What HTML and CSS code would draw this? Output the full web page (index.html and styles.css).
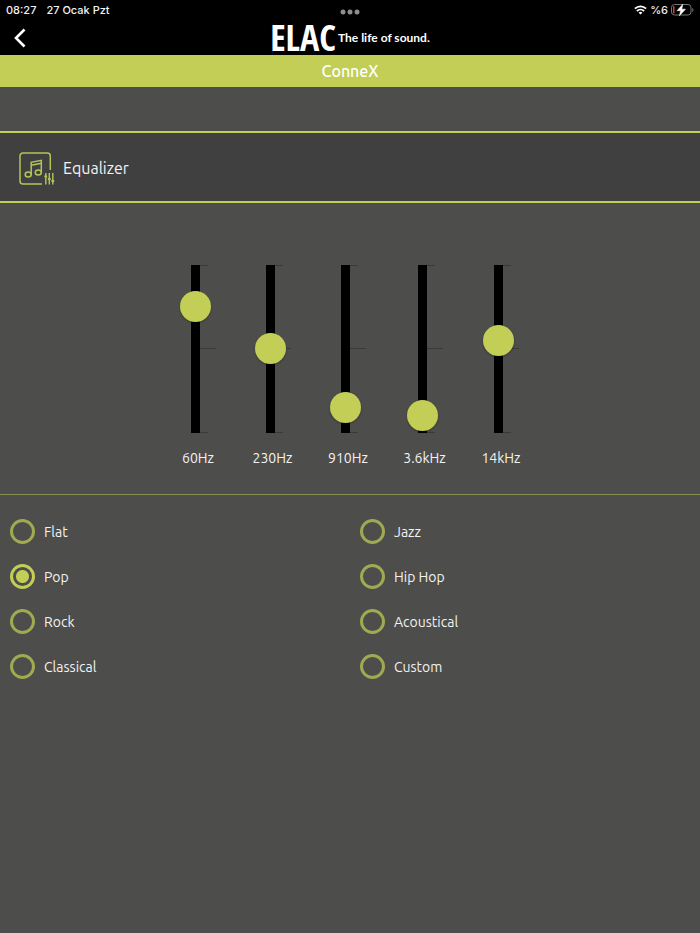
FILE: index.html
```html
<!DOCTYPE html>
<html lang="en">
<head>
  <meta charset="UTF-8">
  <meta name="viewport" content="width=device-width, initial-scale=1.0">
  <title>ConneX Equalizer</title>
  <link rel="stylesheet" href="styles.css">
</head>
<body>
  <header>
    <div class="status-bar">
      <div class="status-left">
        <span>08:27</span>
        <span>27 Ocak Pzt</span>
      </div>
      <svg class="dots" width="20" height="6" viewBox="0 0 20 6" fill="#8e8e8e">
        <circle cx="3" cy="3" r="2.5"></circle>
        <circle cx="10" cy="3" r="2.5"></circle>
        <circle cx="17" cy="3" r="2.5"></circle>
      </svg>
      <div class="status-right">
        <svg width="13" height="10" viewBox="0 0 13 10" fill="none" stroke="#fff" stroke-width="1.8">
          <path d="M.9 3.7a8 8 0 0 1 11.2 0"></path>
          <path d="M2.9 6a5.2 5.2 0 0 1 7.2 0"></path>
          <path d="M6.5 9.6 4.6 7.7a2.8 2.8 0 0 1 3.8 0z" fill="#fff" stroke="none"></path>
        </svg>
        <span>%6</span>
        <svg width="23" height="12" viewBox="0 0 23 12">
          <rect x=".5" y=".5" width="19.5" height="10.5" rx="3" fill="none" stroke="#777"></rect>
          <path d="M21.3 4v4q1.2-.6 1.2-2t-1.2-2" fill="#777"></path>
          <rect x="2" y="2" width="1.5" height="7.5" rx=".7" fill="#e8372c"></rect>
          <path d="M11.8.2 6 6.700h3.600L8.400 11.800 14.500 5.200h-3.700z" fill="#fff" stroke="#fff" stroke-width=".5"></path>
        </svg>
      </div>
    </div>
    <div class="nav-bar">
      <button type="button" class="back" aria-label="Back">
        <svg width="12" height="20" viewBox="0 0 12 20" fill="none" stroke="#fff" stroke-width="2.6">
          <path d="M10.5 1.500 2 10l8.500 8.500"></path>
        </svg>
      </button>
      <div class="brand">
        <span class="logo">ELAC</span>
        <span class="tagline">The life of sound.</span>
      </div>
    </div>
    <h1>ConneX</h1>
  </header>

  <main>
    <div class="section-title">
      <svg width="36" height="33" viewBox="0 0 36 33" fill="none" stroke="#b5c457" stroke-width="1.5">
        <path d="M31.300 18V4a3 3 0 0 0-3-3H4a3 3 0 0 0-3 3v25a3 3 0 0 0 3 3h19"></path>
        <ellipse cx="9.200" cy="22.500" rx="3" ry="2.500"></ellipse>
        <ellipse cx="19.300" cy="20.500" rx="3" ry="2.500"></ellipse>
        <path d="M12.200 22.500V10.300l10.100-2v12.200M12.200 13.300l10.100-2"></path>
        <path d="M26.800 21v11.500M30.300 21v11.500M33.800 21v11.500" stroke-width="1.4"></path>
        <path d="M25.400 24.500h2.800M28.900 27h2.800M32.400 29h2.800" stroke-width="2.2"></path>
      </svg>
      <h2>Equalizer</h2>
    </div>

    <div class="bands">
      <div class="band">
        <input type="range" id="band-60" min="-10" max="10" value="5">
        <label for="band-60">60Hz</label>
      </div>
      <div class="band">
        <input type="range" id="band-230" min="-10" max="10" value="0">
        <label for="band-230">230Hz</label>
      </div>
      <div class="band">
        <input type="range" id="band-910" min="-10" max="10" value="-7">
        <label for="band-910">910Hz</label>
      </div>
      <div class="band">
        <input type="range" id="band-3600" min="-10" max="10" value="-8">
        <label for="band-3600">3.6kHz</label>
      </div>
      <div class="band">
        <input type="range" id="band-14000" min="-10" max="10" value="1">
        <label for="band-14000">14kHz</label>
      </div>
    </div>

    <form class="presets">
      <label><input type="radio" name="preset" value="flat">Flat</label>
      <label><input type="radio" name="preset" value="jazz">Jazz</label>
      <label><input type="radio" name="preset" value="pop" checked>Pop</label>
      <label><input type="radio" name="preset" value="hiphop">Hip Hop</label>
      <label><input type="radio" name="preset" value="rock">Rock</label>
      <label><input type="radio" name="preset" value="acoustical">Acoustical</label>
      <label><input type="radio" name="preset" value="classical">Classical</label>
      <label><input type="radio" name="preset" value="custom">Custom</label>
    </form>
  </main>
</body>
</html>
```
FILE: styles.css
```css
* {
  box-sizing: border-box;
}
body {
  margin: 0;
  min-height: 100vh;
  background-color: #4d4d4b;
  color: #f2f2f2;
  font-family: Ubuntu, "Noto Sans", sans-serif;
  font-size: 14px;
  line-height: 20px;
}
header {
  background-color: #000;
}
.status-bar {
  display: grid;
  grid-template-columns: 1fr auto 1fr;
  align-items: center;
  height: 20px;
  padding: 0 6px;
  font-family: Inter, sans-serif;
  font-size: 11px;
  font-weight: 500;
}
.status-left {
  display: flex;
  gap: 10px;
}
.status-right {
  display: flex;
  align-items: center;
  justify-content: flex-end;
  gap: 3px;
}
.dots {
  align-self: end;
  margin-bottom: 5px;
}
.nav-bar {
  display: grid;
  grid-template-columns: 1fr auto 1fr;
  align-items: center;
  height: 35px;
  padding: 0 14px;
}
.back {
  display: flex;
  justify-self: start;
  padding: 0;
  border: 0;
  background: none;
  cursor: pointer;
}
.brand {
  display: flex;
  align-items: center;
  gap: 2px;
  color: #fff;
}
.logo {
  font-family: "Liberation Sans Narrow", "Open Sans Condensed", "DejaVu Sans Condensed", sans-serif;
  font-size: 36px;
  font-weight: bold;
  line-height: 35px;
}
.tagline {
  font-family: Lato, sans-serif;
  font-size: 12px;
  font-weight: bold;
}
h1 {
  margin: 0;
  background-color: #c2ce55;
  color: #fff;
  font-size: 16px;
  font-weight: 500;
  line-height: 32px;
  text-align: center;
}
.section-title {
  display: flex;
  align-items: center;
  gap: 8px;
  height: 72px;
  margin-top: 44px;
  padding: 2px 19px 0;
  border-top: 2px solid #c2ce55;
  border-bottom: 2px solid #c2ce55;
  background-color: #404040;
}
h2 {
  margin: 0;
  font-size: 16px;
  font-weight: 400;
}
.bands {
  display: grid;
  grid-template-columns: 74px 75px 76px 77px 76px;
  justify-content: center;
  padding: 46px 0 26px;
  border-bottom: 1px solid #848e50;
}
.band {
  display: flex;
  flex-direction: column;
  align-items: center;
}
.band input {
  appearance: none;
  writing-mode: vertical-lr;
  direction: rtl;
  width: 41px;
  height: 199px;
  margin: 0 5px 0 0;
  background:
    linear-gradient(#000, #000) center / 9px 168px no-repeat,
    linear-gradient(#3a3a39, #3a3a39) 25px 16px / 8px 1px no-repeat,
    linear-gradient(#3a3a39, #3a3a39) 25px 99px / 16px 1px no-repeat,
    linear-gradient(#3a3a39, #3a3a39) 25px 183px / 8px 1px no-repeat;
}
.band input::-webkit-slider-thumb {
  appearance: none;
  width: 31px;
  height: 31px;
  border-radius: 50%;
  background-color: #c2ce55;
  box-shadow: 0 1px 2px rgba(0, 0, 0, 0.3);
}
.presets {
  display: grid;
  grid-template-columns: 1fr 1fr;
  row-gap: 20px;
  padding-top: 24px;
}
.presets label {
  display: flex;
  align-items: center;
  gap: 9px;
  height: 25px;
  padding-left: 10px;
}
.presets input {
  appearance: none;
  width: 25px;
  height: 25px;
  margin: 0;
  border: 3px solid #a0aa50;
  border-radius: 50%;
}
.presets input:checked {
  border-color: #c2ce55;
  background: radial-gradient(circle, #c2ce55 6px, transparent 7px);
}
```
